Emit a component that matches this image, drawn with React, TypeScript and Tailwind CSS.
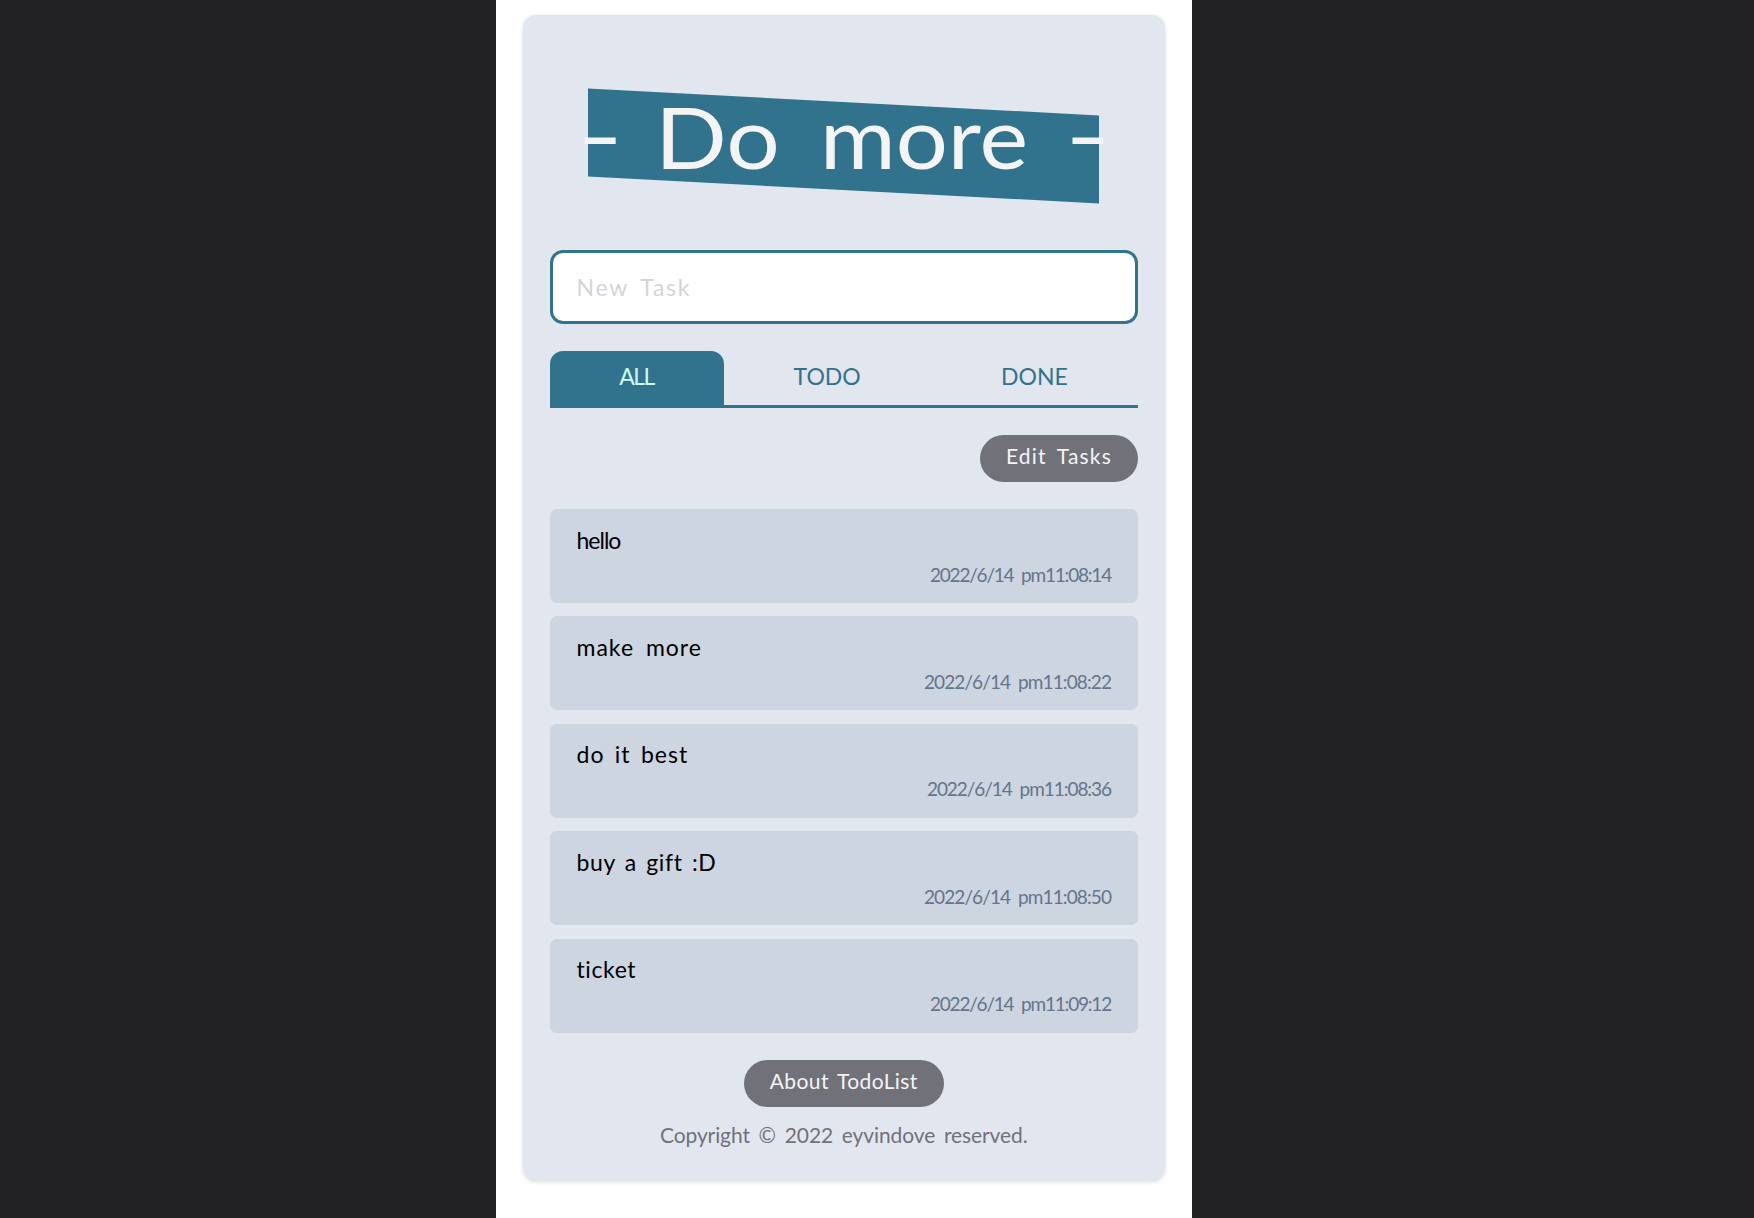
const tasks = [
  { title: "hello", time: "2022/6/14 pm11:08:14", titleClass: "tracking-[-1px]", timeClass: "tracking-[-1.2px]" },
  { title: "make more", time: "2022/6/14 pm11:08:22", titleClass: "tracking-[1px] [word-spacing:5px]", timeClass: "tracking-[-0.9px]" },
  { title: "do it best", time: "2022/6/14 pm11:08:36", titleClass: "tracking-[1px] [word-spacing:3.5px]", timeClass: "tracking-[-1.05px]" },
  { title: "buy a gift :D", time: "2022/6/14 pm11:08:50", titleClass: "tracking-[0.6px] [word-spacing:3px]", timeClass: "tracking-[-0.9px]" },
  { title: "ticket", time: "2022/6/14 pm11:09:12", titleClass: "tracking-[0.6px]", timeClass: "tracking-[-1.2px]" },
];

export default function App() {
  return (
    <div className="h-[1218px] overflow-hidden bg-[#212123] font-['Lato',sans-serif]">
      <div className="ml-[496px] h-full w-[696px] bg-white px-[27px] pt-[15px]">
        <main className="flex h-[1166px] w-[642px] flex-col rounded-[13px] bg-[#e2e7ef] pl-[26.5px] pr-[27px] shadow-[0_1px_4px_rgba(0,0,0,0.14)]">
          <header className="relative mt-[87px] flex h-[88px] shrink-0 items-center justify-center">
            <div className="absolute inset-y-0 left-[38.5px] right-[39px] skew-y-3 bg-[#31738d]" />
            <h1 className="relative flex w-[534px] shrink-0 items-baseline whitespace-nowrap pb-[20px] text-[86px] leading-none text-[#f4f4f5]">
              <span className="w-[32px] origin-left -translate-y-[3px] scale-x-145">-</span>
              <span className="ml-[46px] w-[124px] origin-left scale-x-110">Do</span>
              <span className="ml-[41px] w-[210px] origin-left scale-x-107">more</span>
              <span className="ml-auto w-[32px] origin-right -translate-y-[3px] scale-x-145 text-right">-</span>
            </h1>
          </header>

          <input
            placeholder="New Task"
            className="mt-[60px] h-[74px] w-full shrink-0 rounded-[13px] border-[3px] border-[#31738d] bg-white px-[24px] text-[23px] tracking-[1.7px] [word-spacing:5px] outline-none placeholder:text-[#d4d4d8]"
          />

          <nav className="mt-[27px] flex h-[57px] shrink-0 text-[23px] leading-[48px] text-[#31738d]">
            <button className="w-[174px] rounded-t-[13px] border-b-[3px] border-[#31738d] bg-[#31738d] pb-[5px] tracking-[-1.5px] text-[#ccfbf1]">
              ALL
            </button>
            <button className="flex-1 border-b-[3px] border-[#31738d] pb-[5px]">TODO</button>
            <button className="flex-1 border-b-[3px] border-[#31738d] pb-[5px]">DONE</button>
          </nav>

          <button className="mt-[27px] h-[47px] w-[158px] shrink-0 self-end whitespace-nowrap rounded-full bg-[#71717a] pb-[6px] text-[21px] tracking-[1.2px] text-[#f4f4f5] [word-spacing:4px]">
            Edit Tasks
          </button>

          <ul className="mt-[27px] flex shrink-0 flex-col gap-[13.6px]">
            {tasks.map((task) => (
              <li key={task.title} className="flex h-[93.9px] flex-col rounded-[7px] bg-[#cdd5e0] px-[27px] pt-[12.5px]">
                <span className={`text-[23px] leading-[36px] text-black ${task.titleClass}`}>{task.title}</span>
                <span className={`self-end whitespace-nowrap text-[19px] leading-[34px] text-[#64748b] [word-spacing:4px] ${task.timeClass}`}>
                  {task.time}
                </span>
              </li>
            ))}
          </ul>

          <footer className="mt-[27px] flex flex-col items-center">
            <button className="h-[47px] w-[200px] whitespace-nowrap rounded-full bg-[#71717a] pb-[6px] text-[21px] tracking-[0.4px] text-[#f4f4f5] [word-spacing:3px]">
              About TodoList
            </button>
            <p className="mt-[12px] whitespace-nowrap text-[21px] leading-[32px] tracking-[-0.1px] text-[#71717a] [word-spacing:3.5px]">
              Copyright © 2022 eyvindove reserved.
            </p>
          </footer>
        </main>
      </div>
    </div>
  );
}
